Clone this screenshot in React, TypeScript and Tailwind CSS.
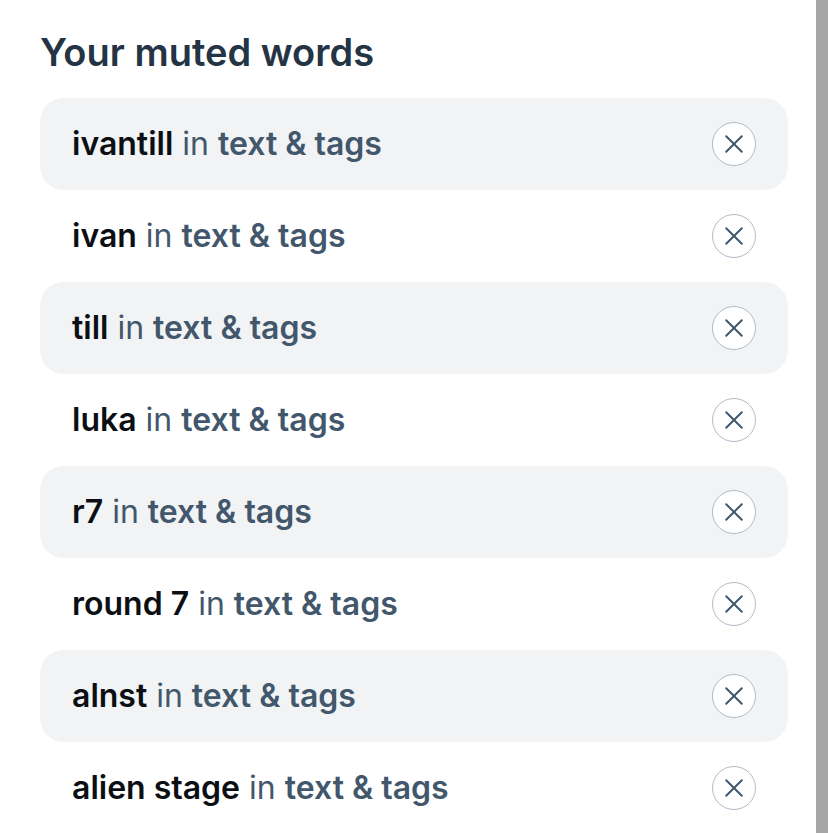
const mutedWords = [
  { value: 'ivantill', target: 'text & tags' },
  { value: 'ivan', target: 'text & tags' },
  { value: 'till', target: 'text & tags' },
  { value: 'luka', target: 'text & tags' },
  { value: 'r7', target: 'text & tags' },
  { value: 'round 7', target: 'text & tags' },
  { value: 'alnst', target: 'text & tags' },
  { value: 'alien stage', target: 'text & tags' },
]

function CloseIcon() {
  return (
    <svg viewBox="0 0 24 24" fill="none" className="h-6 w-6 text-[#42576c]">
      <path d="M4.2 4.2 19.8 19.8M19.8 4.2 4.2 19.8" stroke="currentColor" strokeWidth="2" strokeLinecap="round" />
    </svg>
  )
}

function MutedWordRow({ value, target, shaded }: { value: string; target: string; shaded: boolean }) {
  return (
    <li className={`flex h-[92px] items-center justify-between rounded-[24px] px-8 ${shaded ? 'bg-[#f1f3f5]' : 'bg-white'}`}>
      <p className="text-[32px] leading-[42px] text-[#42576c]">
        <span className="font-semibold text-[#0b0f14]">{value}</span> in{' '}
        <span className="font-semibold">{target}</span>
      </p>
      <button
        type="button"
        aria-label="Remove mute word from your list"
        className="flex h-11 w-11 items-center justify-center rounded-full border border-[#aebbc9] bg-white"
      >
        <CloseIcon />
      </button>
    </li>
  )
}

export default function App() {
  return (
    <div className="flex h-[833px] w-[828px] overflow-hidden bg-white font-['Inter',sans-serif]">
      <main className="flex-1 pt-6 pr-7 pl-10">
        <h2 className="mb-[18px] text-[38px] leading-[56px] font-semibold text-[#243444]">Your muted words</h2>
        <ul>
          {mutedWords.map((word, i) => (
            <MutedWordRow key={word.value} {...word} shaded={i % 2 === 0} />
          ))}
        </ul>
      </main>
      <div className="w-3 bg-[#a6a6a6]" />
    </div>
  )
}
